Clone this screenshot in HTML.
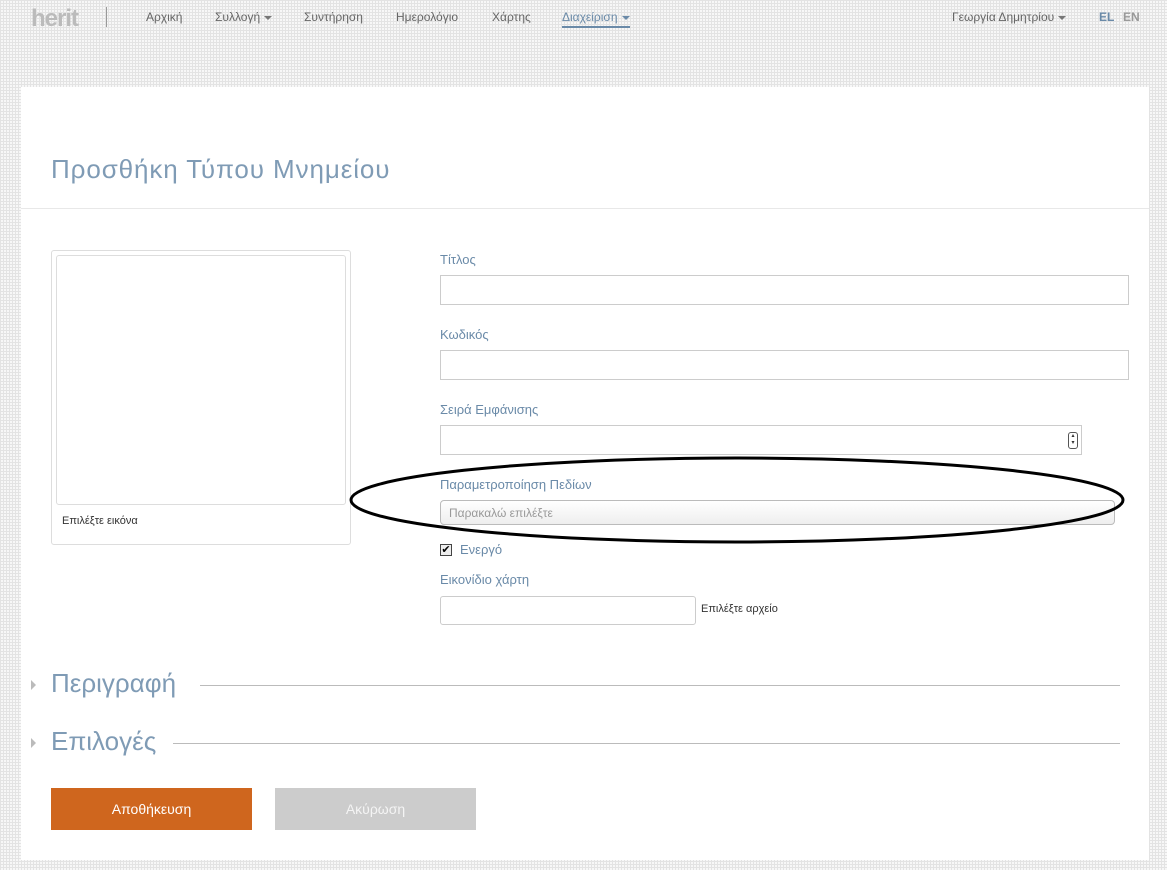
<!DOCTYPE html>
<html><head><meta charset="utf-8"><style>
*{margin:0;padding:0;box-sizing:border-box}
body{width:1167px;height:870px;position:relative;overflow:hidden;font-family:"Liberation Sans","DejaVu Sans",sans-serif;
background-color:#f7f7f7;
background-image:linear-gradient(#e3e3e3 1px,transparent 1px),linear-gradient(90deg,#e3e3e3 1px,transparent 1px);
background-size:3px 3px}
.a{position:absolute}
.nav{font-size:12px;color:#666;top:10px}
.caret{display:inline-block;width:0;height:0;border-left:4px solid transparent;border-right:4px solid transparent;border-top:4px solid #777;vertical-align:middle;margin-left:4px}
.panel{left:21px;top:87px;width:1128px;height:773px;background:#fff}
.lbl{color:#6a8aa8;font-size:13px}
.inp{border:1px solid #ccc;background:#fff;height:30px}
.h2{color:#7f9bb5;font-size:26px;font-weight:300}
.line{height:1px;background:#bbb}
.tri{width:0;height:0;border-top:5px solid transparent;border-bottom:5px solid transparent;border-left:5px solid #bbb}
</style></head><body>
<div class="a" style="left:31px;top:5px;font-size:24px;font-weight:bold;color:#bbb;letter-spacing:-1px">herit</div>
<div class="a" style="left:106px;top:7px;width:1px;height:20px;background:#999"></div>
<div class="a nav" style="left:146px">Αρχική</div>
<div class="a nav" style="left:215px">Συλλογή<span class="caret"></span></div>
<div class="a nav" style="left:304px">Συντήρηση</div>
<div class="a nav" style="left:396px">Ημερολόγιο</div>
<div class="a nav" style="left:492px">Χάρτης</div>
<div class="a nav" style="left:562px;color:#6a8aa8;border-bottom:2px solid #6a8aa8;padding-bottom:2px">Διαχείριση<span class="caret" style="border-top-color:#6a8aa8"></span></div>
<div class="a nav" style="left:952px">Γεωργία Δημητρίου<span class="caret"></span></div>
<div class="a nav" style="left:1099px;font-weight:bold;color:#6a8aa8">EL</div>
<div class="a nav" style="left:1123px;font-weight:bold;color:#999">EN</div>

<div class="a panel"></div>
<div class="a" style="left:51px;top:154px;font-size:26px;color:#7f9bb5;letter-spacing:0.9px">Προσθήκη Τύπου Μνημείου</div>
<div class="a" style="left:21px;top:208px;width:1128px;height:1px;background:#e8e8e8"></div>

<div class="a" style="left:51px;top:250px;width:300px;height:295px;border:1px solid #ddd;border-radius:3px"></div>
<div class="a" style="left:56px;top:255px;width:290px;height:250px;border:1px solid #ddd;border-radius:3px"></div>
<div class="a" style="left:62px;top:515px;font-size:11px;color:#333">Επιλέξτε εικόνα</div>

<div class="a lbl" style="left:440px;top:252px">Τίτλος</div>
<div class="a inp" style="left:440px;top:275px;width:689px"></div>
<div class="a lbl" style="left:440px;top:327px">Κωδικός</div>
<div class="a inp" style="left:440px;top:350px;width:689px"></div>
<div class="a lbl" style="left:440px;top:402px">Σειρά Εμφάνισης</div>
<div class="a inp" style="left:440px;top:425px;width:642px"></div>
<div class="a" style="left:1068px;top:432px;width:10px;height:17px;border:1px solid #555;border-radius:3px;font-size:6px;text-align:center;line-height:7px;color:#333">▴<br>▾</div>
<div class="a lbl" style="left:440px;top:477px">Παραμετροποίηση Πεδίων</div>
<div class="a" style="left:440px;top:500px;width:675px;height:25px;border:1px solid #bbb;border-radius:4px;background:linear-gradient(#fff,#eee);font-size:12px;color:#999;padding:5px 8px">Παρακαλώ επιλέξτε</div>
<svg class="a" style="left:345px;top:452px" width="790" height="96"><ellipse cx="392" cy="48" rx="386" ry="42" fill="none" stroke="#000" stroke-width="3"/></svg>
<div class="a" style="left:440px;top:544px;width:12px;height:12px;border:1px solid #444;background:#eee;font-size:11px;line-height:10px;text-align:center">✔</div>
<div class="a lbl" style="left:460px;top:542px">Ενεργό</div>
<div class="a lbl" style="left:440px;top:572px">Εικονίδιο χάρτη</div>
<div class="a inp" style="left:440px;top:596px;width:256px;height:29px;border-radius:3px"></div>
<div class="a" style="left:701px;top:603px;font-size:11px;color:#333">Επιλέξτε αρχείο</div>

<div class="a tri" style="left:31px;top:680px"></div>
<div class="a h2" style="left:51px;top:668px">Περιγραφή</div>
<div class="a line" style="left:200px;top:685px;width:920px"></div>
<div class="a tri" style="left:31px;top:738px"></div>
<div class="a h2" style="left:51px;top:726px">Επιλογές</div>
<div class="a line" style="left:173px;top:743px;width:947px"></div>

<div class="a" style="left:51px;top:788px;width:201px;height:42px;background:#cf661e;color:#fff;font-size:14px;text-align:center;line-height:42px">Αποθήκευση</div>
<div class="a" style="left:275px;top:788px;width:201px;height:42px;background:#cccccc;color:#f4f4f4;font-size:14px;text-align:center;line-height:42px">Ακύρωση</div>
</body></html>
